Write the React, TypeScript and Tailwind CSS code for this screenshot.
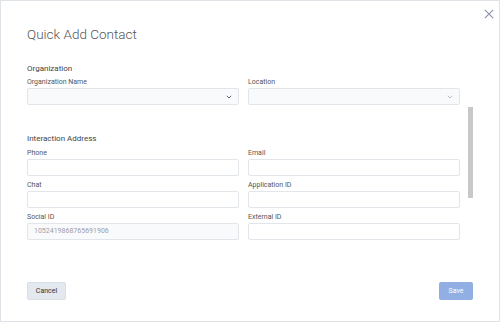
import React from 'react';

const Chevron = ({ light }: { light?: boolean }) => (
  <svg width="6" height="4" viewBox="0 0 6 4" className={light ? 'text-[#b8bec7]' : 'text-[#5b6470]'}>
    <path d="M0.8 0.8 L3 3 L5.2 0.8" fill="none" stroke="currentColor" strokeWidth="1" />
  </svg>
);

const Field = ({ label, value, select, lightChevron, filled }: { label: string; value?: string; select?: boolean; lightChevron?: boolean; filled?: boolean }) => (
  <div className="flex flex-col">
    <label className="h-[10px] leading-[10px] text-[7px] text-[#555]">{label}</label>
    <div
      className={`mt-[1px] h-[17px] border border-[#e2e5ea] rounded-[2px] flex items-center justify-between px-[6px] ${filled ? 'bg-[#f9fafc]' : 'bg-white'}`}
    >
      <span className="text-[7px] text-[#9a9ea5]">{value}</span>
      {select && <Chevron light={lightChevron} />}
    </div>
  </div>
);

export default function App() {
  return (
    <div className="w-[500px] h-[322px] bg-white border border-[#dfe3e8] relative flex flex-col font-['Roboto',sans-serif]">
      {/* close */}
      <button className="absolute left-[482px] top-[7px] w-[11px] h-[11px] flex items-center justify-center">
        <svg width="10" height="10" viewBox="0 0 10 10">
          <path d="M0.8 0.8 L9.2 9.2 M9.2 0.8 L0.8 9.2" stroke="#8792a2" strokeWidth="1.1" />
        </svg>
      </button>

      {/* scrollbar thumb */}
      <div className="absolute left-[467px] top-[106px] w-[5px] h-[91px] bg-[#c8c8c8]" />

      <div className="pl-[26px] pr-[39px] pt-[25px]">
        <h1 className="h-[17px] leading-[17px] text-[13.5px] font-light text-[#555]">Quick Add Contact</h1>

        <h2 className="mt-[21px] h-[10px] leading-[10px] text-[8px] font-normal text-[#444]">Organization</h2>
        <div className="mt-[3px] grid grid-cols-2 gap-x-[9px]">
          <Field label="Organization Name" select filled />
          <Field label="Location" select lightChevron filled />
        </div>

        <h2 className="mt-[29px] h-[10px] leading-[10px] text-[8px] font-normal text-[#444]">Interaction Address</h2>
        <div className="mt-[4px] grid grid-cols-2 gap-x-[9px] gap-y-[4px]">
          <Field label="Phone" />
          <Field label="Email" />
          <Field label="Chat" />
          <Field label="Application ID" />
          <Field label="Social ID" value="1052419868765691906" filled />
          <Field label="External ID" />
        </div>
      </div>

      <div className="mt-auto pl-[26px] pr-[26px] pb-[21px] flex justify-between">
        <button className="w-[39px] h-[18px] bg-[#e4e8ef] border border-[#d9dee6] rounded-[2px] text-[7px] text-[#333]">Cancel</button>
        <button className="w-[34px] h-[18px] bg-[#91afe3] rounded-[2px] text-[7px] text-white">Save</button>
      </div>
    </div>
  );
}
